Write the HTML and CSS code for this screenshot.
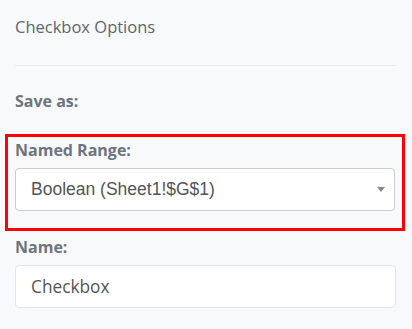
FILE: index.html
```html
<!DOCTYPE html>
<html lang="en">
<head>
  <meta charset="UTF-8" />
  <meta name="viewport" content="width=device-width, initial-scale=1.0"/>
  <title>Checkbox Options</title>
  <link rel="stylesheet" href="styles.css">
</head>
<body>

<div class="panel">
  <h2 class="panel-title">Checkbox Options</h2>
  <hr class="divider">

  <div class="save-as">Save as:</div>

  <div class="highlight">
    <label class="field-label">Named Range:</label>
    <div class="select">
      <span class="select-value">Boolean (Sheet1!$G$1)</span>
      <span class="select-arrow"></span>
    </div>
  </div>

  <div class="field">
    <label class="field-label">Name:</label>
    <div class="text-input">Checkbox</div>
  </div>
</div>

</body>
</html>
```

FILE: styles.css
```css
html, body {
  margin: 0; padding: 0; height: 100%;
  font-family: 'Open Sans', sans-serif;
  background: #f8f9fa; color: #6c757d; overflow: hidden;
}

.panel { padding: 16px 16px 0 15px; width: 381px; }

.panel-title {
  margin: 0; font-size: 16.5px; line-height: 22px;
  font-weight: 400; color: #5f666d;
}

.divider {
  margin: 27px 0 0; border: none;
  border-top: 1px solid #e9ecef;
}

.save-as {
  margin-top: 24px; font-size: 16px; line-height: 22px;
  font-weight: 700; color: #6c757d;
}

.highlight {
  margin: 22px -9px 0 -10px;
  border: 3px solid #ff0000;
  padding: 2px 7px 17px 7px;
}

.field-label {
  display: block; font-size: 16px; line-height: 22px;
  font-weight: 700; color: #6c757d;
  margin-bottom: 7px;
}

.select {
  display: flex; align-items: center; justify-content: space-between;
  height: 41px; padding: 0 9px 0 15px;
  background: #fff; border: 1px solid #ccc; border-radius: 4px;
}

.select-value {
  font-family: 'Liberation Sans', Arial, sans-serif;
  font-size: 17.5px; color: #555;
}

.select-arrow {
  width: 0; height: 0;
  border-left: 4px solid transparent;
  border-right: 4px solid transparent;
  border-top: 5px solid #888;
}

.field { margin-top: 5px; }

.text-input {
  display: flex; align-items: center;
  height: 41px; padding: 0 15px;
  background: #fff; border: 1px solid #e3e6e9; border-radius: 4px;
  font-size: 17.3px; color: #555;
}
```
